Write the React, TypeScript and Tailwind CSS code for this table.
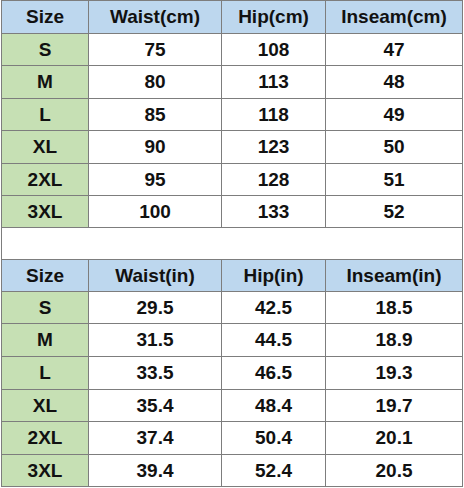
import React from "react";

const rowsCm = [
  ["S", "75", "108", "47"],
  ["M", "80", "113", "48"],
  ["L", "85", "118", "49"],
  ["XL", "90", "123", "50"],
  ["2XL", "95", "128", "51"],
  ["3XL", "100", "133", "52"],
];
const rowsIn = [
  ["S", "29.5", "42.5", "18.5"],
  ["M", "31.5", "44.5", "18.9"],
  ["L", "33.5", "46.5", "19.3"],
  ["XL", "35.4", "48.4", "19.7"],
  ["2XL", "37.4", "50.4", "20.1"],
  ["3XL", "39.4", "52.4", "20.5"],
];

function Header({ cols }: { cols: string[] }) {
  return (
    <>
      {cols.map((c) => (
        <div key={c} className="bg-[#bdd7ee] flex items-center justify-center pb-px">
          {c}
        </div>
      ))}
    </>
  );
}

function Rows({ rows }: { rows: string[][] }) {
  return (
    <>
      {rows.map((r) =>
        r.map((v, i) => (
          <div
            key={r[0] + i}
            className={
              (i === 0 ? "bg-[#c6e0b4]" : "bg-white") +
              " flex items-center justify-center pb-px"
            }
          >
            {v}
          </div>
        ))
      )}
    </>
  );
}

export default function App() {
  return (
    <div className="w-[464px] h-[488px] bg-white">
      <div
        className="ml-px w-[462px] grid gap-px p-px bg-[#7d7d7d] text-[19px] leading-none font-bold text-[#111111] grid-cols-[86px_132px_103px_136px] grid-rows-[32px_31px_32px_31px_32px_31px_31px_31px_31px_31px_32px_32px_31px_32px_31px]"
        style={{ fontFamily: '"Liberation Sans", Arial, sans-serif' }}
      >
        <Header cols={["Size", "Waist(cm)", "Hip(cm)", "Inseam(cm)"]} />
        <Rows rows={rowsCm} />
        <div className="col-span-4 bg-white" />
        <Header cols={["Size", "Waist(in)", "Hip(in)", "Inseam(in)"]} />
        <Rows rows={rowsIn} />
      </div>
    </div>
  );
}
